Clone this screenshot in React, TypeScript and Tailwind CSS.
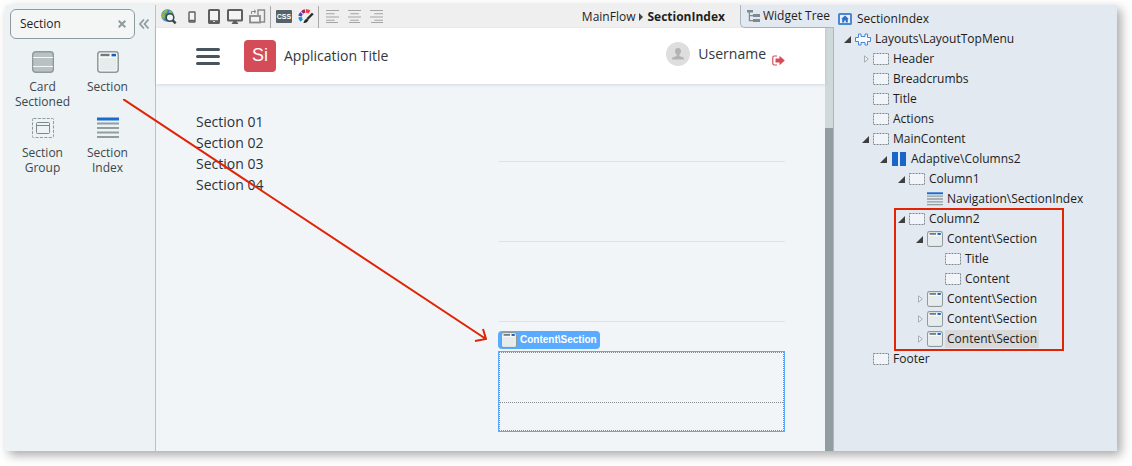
import React from "react";

type IconProps = { className?: string };

function SectionIcon({ className = "size-4" }: IconProps) {
  return (
    <svg viewBox="0 0 22 22" className={className} aria-hidden="true">
      <rect x="0.8" y="0.8" width="20.4" height="20.4" rx="2.6" fill="#f8fafa" stroke="#8d989b" strokeWidth="1.5" />
      <rect x="2.5" y="7" width="17" height="12.5" fill="#e6ebec" />
      <rect x="3.5" y="2.8" width="9" height="2.4" fill="#6f7b80" />
      <rect x="14.5" y="2.8" width="4.5" height="2.6" fill="#0f62c8" />
    </svg>
  );
}

function CardIcon() {
  return (
    <svg viewBox="0 0 22 22" className="size-[22px]" aria-hidden="true">
      <rect x="0.7" y="0.7" width="20.6" height="20.6" rx="3" fill="#b9c1c2" stroke="#8f9a9d" strokeWidth="1.4" />
      <path d="M1 6.5H21M1 15.5H21" stroke="#f4f7f7" strokeWidth="1.2" />
    </svg>
  );
}

function GroupIcon() {
  return (
    <svg viewBox="0 0 22 22" className="size-[22px]" fill="none" aria-hidden="true">
      <rect x="0.5" y="1.5" width="21" height="19" rx="1" stroke="#8f9a9d" strokeDasharray="3 1.4" />
      <rect x="4.5" y="5.5" width="13" height="11" rx="1" stroke="#7d898c" />
      <path d="M5 8.5H17" stroke="#7d898c" />
    </svg>
  );
}

function IndexIcon({ className = "size-4" }: IconProps) {
  return (
    <svg viewBox="0 0 22 22" preserveAspectRatio="none" className={className} aria-hidden="true">
      <rect x="0" y="0.5" width="22" height="3" fill="#1a6bd0" />
      <path d="M0 6.5H22M0 11H22M0 15.5H22M0 20H22" stroke="#929da0" strokeWidth="2" />
    </svg>
  );
}

function SlotIcon() {
  return (
    <svg viewBox="0 0 16 14" className="h-[14px] w-4" aria-hidden="true">
      <rect x="0.5" y="1.5" width="15" height="11" fill="#f1f4f8" stroke="#7e898e" strokeDasharray="2 1" />
    </svg>
  );
}

function ColumnsIcon() {
  return (
    <svg viewBox="0 0 16 14" className="h-[14px] w-4" fill="#1a66c8" aria-hidden="true">
      <rect x="1" width="6" height="14" />
      <rect x="9" width="6" height="14" />
    </svg>
  );
}

function PuzzleIcon() {
  return (
    <svg viewBox="0 0 16 13" className="h-[13px] w-4" aria-hidden="true">
      <path
        d="M3.5 1H6V3.5H10V1H12.5V4.5H15.5V8.5H12.5V12H10V9.5H6V12H3.5V8.5H.5V4.5H3.5Z"
        fill="#f6f9fd"
        stroke="#4a85cf"
        strokeLinejoin="round"
      />
    </svg>
  );
}

function ScreenIcon() {
  return (
    <svg viewBox="0 0 14 12" className="h-3 w-[14px]" aria-hidden="true">
      <rect x="1" y="1" width="12" height="10" rx="0.5" fill="#eaf1fa" stroke="#4a88d6" strokeWidth="2" />
      <path d="M7 2.4L10.8 6H9.8V9.4H7.8V7.4H6.2V9.4H4.2V6H3.2Z" fill="#2f6fc4" />
    </svg>
  );
}

function Toolbar() {
  const btn = "flex h-5 items-center justify-center";
  return (
    <div className="flex items-center gap-1 pl-1" role="toolbar">
      <button aria-label="Preview in browser" className={btn}>
        <svg viewBox="0 0 18 18" className="size-[18px]">
          <circle cx="7.5" cy="7.5" r="6.2" fill="#3f83b8" />
          <path d="M2 6Q4 1.5 8 1.6L7 4.5L4.5 6L5 9L4 11.5Q1 9 2 6ZM9.5 2L12.5 4L12 6L9 4.5Z" fill="#8fb84a" />
          <circle cx="10" cy="9.5" r="3.8" fill="#eef4f7" stroke="#36454c" strokeWidth="1.5" />
          <path d="M12.8 12.4L15.6 15.4" stroke="#36454c" strokeWidth="2.4" />
        </svg>
      </button>
      <button aria-label="Phone" className={btn + " w-5"}>
        <svg viewBox="0 0 8 12" className="h-3 w-2">
          <rect x="1" y="1" width="6" height="10" rx="0.5" fill="#f4f4f4" stroke="#5f5f5f" strokeWidth="1.4" />
          <path d="M1 9.6H7" stroke="#5f5f5f" strokeWidth="1.6" />
        </svg>
      </button>
      <button aria-label="Tablet" className={btn + " w-4"}>
        <svg viewBox="0 0 12 15" className="h-[15px] w-3">
          <rect x="1" y="1" width="10" height="13" rx="0.6" fill="#f4f4f4" stroke="#5f5f5f" strokeWidth="2" />
          <path d="M1 12.4H11" stroke="#5f5f5f" strokeWidth="2.4" />
          <rect x="5.2" y="12" width="1.6" height="1" fill="#f4f4f4" />
        </svg>
      </button>
      <button aria-label="Desktop" className={btn + " w-[18px]"}>
        <svg viewBox="0 0 16 15" className="h-[15px] w-4">
          <rect x="1" y="1" width="14" height="10.5" rx="0.6" fill="#f4f4f4" stroke="#5f5f5f" strokeWidth="2" />
          <path d="M4.5 15L6.5 12H9.5L11.5 15Z" fill="#5f5f5f" />
        </svg>
      </button>
      <button aria-label="Rotate device" className={btn + " w-[18px]"}>
        <svg viewBox="0 0 17 15" className="h-[15px] w-[17px]" fill="none" stroke="#8a8a8a">
          <path d="M9 6V1H15.5V13H12" strokeWidth="1.4" />
          <rect x="1" y="7" width="10" height="6.5" strokeWidth="1.8" fill="#f4f4f4" />
          <path d="M2.5 5V2.5H7M5 .8L7 2.5L5 4.2" />
        </svg>
      </button>
      <span className="h-[22px] w-px bg-[#a9a9a9]" />
      <button
        aria-label="Style sheet"
        className="ml-px flex h-[13px] w-4 items-center justify-center rounded-[1px] bg-[#566268] font-['Liberation_Sans',sans-serif] text-[7px] font-bold text-white"
      >
        CSS
      </button>
      <button aria-label="Theme colours" className={btn + " ml-0.5"}>
        <svg viewBox="0 0 16 15" className="h-[15px] w-4" fill="none">
          <path d="M4.2 3.4A6 6 0 0 1 7 2" stroke="#a81c5a" strokeWidth="3.4" />
          <path d="M7.8 2A6 6 0 0 1 11.5 3" stroke="#ec4038" strokeWidth="3.4" />
          <path d="M2 7.2A6 6 0 0 1 3.6 4.2" stroke="#4a48b8" strokeWidth="3.4" />
          <path d="M2 8A6 6 0 0 0 3.8 11.6" stroke="#1b90e8" strokeWidth="3.4" />
          <path d="M14.8 4.5L9.4 10" stroke="#2b2b2b" strokeWidth="2.4" />
          <path d="M9 9.5Q6 10.5 5.5 14Q9 14.5 10.5 11Z" fill="#2b2b2b" />
        </svg>
      </button>
      <span className="h-[22px] w-px bg-[#a9a9a9]" />
      <div className="flex gap-[9px] pl-[3px]">
        {["M0 .5H12M0 3.5H8M0 6.5H12M0 9.5H8M0 11.5H11", "M0 .5H12M2 3.5H10M0 6.5H12M2 9.5H10M1 11.5H11", "M0 .5H12M4 3.5H12M0 6.5H12M4 9.5H12M1 11.5H12"].map(
          (d, i) => (
            <button key={d} aria-label={["Align left", "Align center", "Align right"][i]} className={btn}>
              <svg viewBox="0 0 12 12" className="size-[13px]" stroke="#a3a3a3">
                <path d={d} />
              </svg>
            </button>
          ),
        )}
      </div>
    </div>
  );
}

const paletteItems = [
  { label: "Card Sectioned", icon: <CardIcon /> },
  { label: "Section", icon: <SectionIcon className="size-[22px]" /> },
  { label: "Section Group", icon: <GroupIcon /> },
  { label: "Section Index", icon: <IndexIcon className="size-[22px]" /> },
];

function Palette() {
  return (
    <aside className="w-[151px] shrink-0 border-r border-[#b9c1c5] bg-[#edf2f5] pt-1 pl-[5px]">
      <div className="flex items-center gap-1">
        <div className="flex h-[30px] w-[125px] items-center rounded-md border border-[#8f9b9e] bg-[#f4f6f6] pr-2 pl-[9px]">
          <input aria-label="Search widgets" defaultValue="Section" className="w-full min-w-0 bg-transparent outline-none" />
          <button aria-label="Clear search">
            <svg viewBox="0 0 8 8" className="size-2" stroke="#8f9b9e" strokeWidth="2">
              <path d="M.7 .7L7.3 7.3M7.3 .7L.7 7.3" />
            </svg>
          </button>
        </div>
        <button aria-label="Collapse panel">
          <svg viewBox="0 0 10 10" className="size-[10px]" fill="none" stroke="#8f9b9e" strokeWidth="1.7">
            <path d="M5 .5L1 5L5 9.5M9.5 .5L5.5 5L9.5 9.5" />
          </svg>
        </button>
      </div>
      <ul className="grid w-[130px] grid-cols-2 gap-y-2 pt-3">
        {paletteItems.map((item) => (
          <li key={item.label}>
            <button className="flex w-full flex-col items-center gap-1.5 px-1 text-center leading-[15px] text-[#3c474c]">
              {item.icon}
              <span>{item.label}</span>
            </button>
          </li>
        ))}
      </ul>
    </aside>
  );
}

function TopBar() {
  return (
    <div className="flex h-[23px] justify-between bg-[#efefef]">
      <Toolbar />
      <div className="flex">
        <nav aria-label="Breadcrumb" className="flex items-center gap-1 pr-[15px]">
          <a href="#mainflow">MainFlow</a>
          <svg viewBox="0 0 4 8" className="h-2 w-1" fill="#444">
            <path d="M0 0L4 4L0 8Z" />
          </svg>
          <b>SectionIndex</b>
        </nav>
        <button className="flex w-[94px] items-center gap-[3px] rounded-bl-[5px] border-b border-l border-[#aab7bc] bg-[#e2e9f0] pl-1.5 whitespace-nowrap">
          <svg viewBox="0 0 13 12" className="h-3 w-[13px]" fill="#7d8a90">
            <path d="M0 0H6V2.5H3V5H7V6.2H3V10H7V11.2H1.8V2.5H0Z" />
            <rect x="6" y="4" width="7" height="3" />
            <rect x="6" y="9" width="7" height="3" />
          </svg>
          Widget Tree
        </button>
      </div>
    </div>
  );
}

function AppHeader() {
  return (
    <header className="relative flex h-14 items-center bg-white px-10 text-sm text-[#32383d] shadow-[0_1px_3px_rgba(60,80,100,0.18)]">
      <button aria-label="Menu" className="flex w-6 flex-col gap-1">
        <span className="h-[3px] rounded-sm bg-[#48555f]" />
        <span className="h-[3px] rounded-sm bg-[#48555f]" />
        <span className="h-[3px] rounded-sm bg-[#48555f]" />
      </button>
      <div className="ml-6 flex size-8 items-center justify-center rounded bg-[#d44c58] pb-0.5 font-['Liberation_Sans',sans-serif] text-lg text-white">
        Si
      </div>
      <span className="ml-2">Application Title</span>
      <div className="mb-1 ml-auto flex items-center">
        <svg viewBox="0 0 24 24" className="size-6">
          <circle cx="12" cy="12" r="12" fill="#dedede" />
          <path d="M12 6C9.8 6 9 7.6 9 9.2Q9.2 11.6 10.6 12.8V14L6.5 15.4Q6 16 6 17.5H18Q18 16 17.5 15.4L13.4 14V12.8Q14.8 11.6 15 9.2C15 7.6 14.2 6 12 6Z" fill="#b3b3b3" />
        </svg>
        <span className="ml-2">Username</span>
        <button aria-label="Log out" className="mt-3 ml-1.5">
          <svg viewBox="0 0 13 11" className="h-[11px] w-[13px]">
            <path d="M5 1H2.2Q.8 1 .8 2.4V8.6Q.8 10 2.2 10H5" fill="none" stroke="#d44c58" strokeWidth="1.2" />
            <path d="M3.5 3.4H7.5V.8L12.8 5.5L7.5 10.2V7.6H3.5Z" fill="#d44c58" />
          </svg>
        </button>
      </div>
    </header>
  );
}

function Canvas() {
  return (
    <div className="flex-1 bg-[#f1f5f8] text-[#2c3136]">
      <AppHeader />
      <div className="grid grid-cols-2 gap-x-[17px] px-10 pt-[27px]">
        <ul className="text-sm leading-[21px]">
          {["Section 01", "Section 02", "Section 03", "Section 04"].map((s) => (
            <li key={s}>{s}</li>
          ))}
        </ul>
        <div>
          {[1, 2, 3].map((n) => (
            <section key={n} className="h-20">
              <div className="h-[51px] border-b border-[#dee2e6]" />
            </section>
          ))}
          <section className="relative -ml-px h-[81px] border border-[#59abff]">
            <div className="absolute bottom-full -left-px mb-[3px] flex h-[18px] items-center gap-[3px] rounded-sm bg-[#59abff] px-[3px] font-['Liberation_Sans',sans-serif] text-[10px] font-bold whitespace-nowrap text-white">
              <SectionIcon />
              Content\Section
            </div>
            <div className="h-full border border-dotted border-[#858b90]">
              <div className="h-[50px] border-b border-dotted border-[#858b90]" />
            </div>
          </section>
        </div>
      </div>
    </div>
  );
}

type Kind = "screen" | "layout" | "slot" | "columns" | "index" | "section";
type TreeRow = { depth: number; label: string; kind: Kind; state?: "open" | "closed"; selected?: boolean };

const icons: Record<Kind, React.ReactNode> = {
  screen: <ScreenIcon />,
  layout: <PuzzleIcon />,
  slot: <SlotIcon />,
  columns: <ColumnsIcon />,
  index: <IndexIcon className="h-[14px] w-4" />,
  section: <SectionIcon />,
};

const upperRows: TreeRow[] = [
  { depth: 0, label: "SectionIndex", kind: "screen" },
  { depth: 1, label: "Layouts\\LayoutTopMenu", kind: "layout", state: "open" },
  { depth: 2, label: "Header", kind: "slot", state: "closed" },
  { depth: 2, label: "Breadcrumbs", kind: "slot" },
  { depth: 2, label: "Title", kind: "slot" },
  { depth: 2, label: "Actions", kind: "slot" },
  { depth: 2, label: "MainContent", kind: "slot", state: "open" },
  { depth: 3, label: "Adaptive\\Columns2", kind: "columns", state: "open" },
  { depth: 4, label: "Column1", kind: "slot", state: "open" },
  { depth: 5, label: "Navigation\\SectionIndex", kind: "index" },
];

const columnRows: TreeRow[] = [
  { depth: 4, label: "Column2", kind: "slot", state: "open" },
  { depth: 5, label: "Content\\Section", kind: "section", state: "open" },
  { depth: 6, label: "Title", kind: "slot" },
  { depth: 6, label: "Content", kind: "slot" },
  { depth: 5, label: "Content\\Section", kind: "section", state: "closed" },
  { depth: 5, label: "Content\\Section", kind: "section", state: "closed" },
  { depth: 5, label: "Content\\Section", kind: "section", state: "closed", selected: true },
];

function Row({ row }: { row: TreeRow }) {
  return (
    <li className="flex h-5 items-center" style={{ paddingLeft: Math.max(row.depth - 1, 0) * 18 }}>
      {row.depth > 0 && (
        <span className="flex w-[18px] shrink-0 justify-end pr-1">
          {row.state === "open" && (
            <svg viewBox="0 0 7 7" className="size-[7px]" fill="#3f3f3f">
              <path d="M7 0V7H0Z" />
            </svg>
          )}
          {row.state === "closed" && (
            <svg viewBox="0 0 5 8" className="h-2 w-[5px]" fill="#eceff2" stroke="#a9afb4">
              <path d="M.5 .8L4.3 4L.5 7.2Z" />
            </svg>
          )}
        </span>
      )}
      <span className="flex w-4 shrink-0 justify-center">{icons[row.kind]}</span>
      <span className={row.selected ? "ml-0.5 bg-[#d9d9d9] px-0.5 leading-[18px]" : "ml-0.5 px-0.5 leading-[18px]"}>{row.label}</span>
    </li>
  );
}

function WidgetTree() {
  return (
    <aside className="w-[283px] shrink-0 bg-[#e2e9f0] pt-1 pl-[3px] whitespace-nowrap text-[#1c1c1c]">
      <ul>
        {upperRows.map((row) => (
          <Row key={row.label} row={row} />
        ))}
      </ul>
      <div className="relative">
        <ul>
          {columnRows.map((row, i) => (
            <Row key={i} row={row} />
          ))}
        </ul>
        <div className="pointer-events-none absolute -top-px -bottom-0.5 left-[57px] w-[170px] border-2 border-[#e02405]" />
      </div>
      <ul>
        <Row row={{ depth: 2, label: "Footer", kind: "slot" }} />
      </ul>
    </aside>
  );
}

export default function App() {
  return (
    <div className="flex min-h-screen bg-white pt-[5px] pr-[15px] pb-[15px] pl-[5px] font-['Open_Sans','Noto_Sans',sans-serif] text-xs text-[#1f1f1f]">
      <main className="relative flex flex-1 shadow-[4px_4px_10px_rgba(0,0,0,0.35)]">
        <Palette />
        <div className="flex min-w-0 flex-1 flex-col">
          <TopBar />
          <div className="flex flex-1">
            <Canvas />
            <div className="flex w-[9px] flex-col border-r border-[#aeb9bc] bg-[#d0d9da]">
              <div className="mt-[100px] flex-1 bg-[#929da1]" />
            </div>
          </div>
        </div>
        <WidgetTree />
        <svg
          viewBox="0 0 364 244"
          className="pointer-events-none absolute top-[94px] left-[118px] h-[244px] w-[364px]"
          fill="none"
          stroke="#e02405"
          strokeWidth="2"
          aria-hidden="true"
        >
          <path d="M0 0L363 240M360 230L363 240L352 242" />
        </svg>
      </main>
    </div>
  );
}
